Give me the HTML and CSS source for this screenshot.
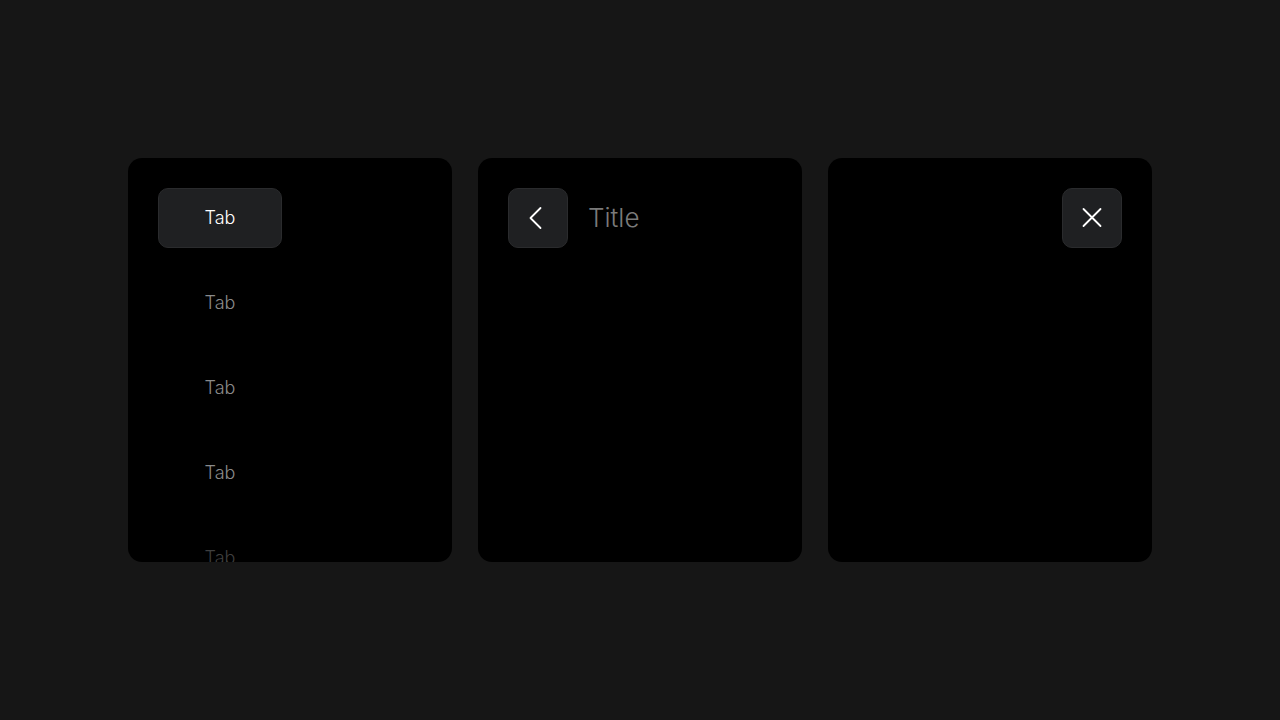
FILE: index.html
```html
<!DOCTYPE html>
<html>
  <head>
    <title>Panels</title>
    <link rel="stylesheet" href="styles.css">
  </head>
  <body>
    <div class="panels">
      <!-- Tab list -->
      <div class="panel">
        <div class="tab-list">
          <button class="tab active">Tab</button>
          <button class="tab">Tab</button>
          <button class="tab">Tab</button>
          <button class="tab">Tab</button>
          <button class="tab faded">Tab</button>
        </div>
      </div>

      <!-- Header with back -->
      <div class="panel">
        <div class="header">
          <button class="icon-btn" aria-label="Back">
            <svg width="24" height="24" viewBox="0 0 24 24" fill="none" stroke="#fff" stroke-width="1.8" stroke-linecap="round" stroke-linejoin="round">
              <path d="M14.5 2 L4.5 12 L14.5 22"/>
            </svg>
          </button>
          <span class="title">Title</span>
        </div>
      </div>

      <!-- Header with close -->
      <div class="panel">
        <div class="header end">
          <button class="icon-btn" aria-label="Close">
            <svg width="24" height="24" viewBox="0 0 24 24" fill="none" stroke="#fff" stroke-width="1.8" stroke-linecap="round">
              <path d="M3.5 3 L20.5 20 M20.5 3 L3.5 20"/>
            </svg>
          </button>
        </div>
      </div>
    </div>
  </body>
</html>
```

FILE: styles.css
```css
body {
  margin: 0;
  padding: 0;
  background-color: #161616;
  font-family: Inter, "Noto Sans", Arial, sans-serif;
  height: 100vh;
}

.panels {
  display: flex;
  gap: 26px;
  padding: 158px 0 0 128px;
}

.panel {
  width: 324px;
  height: 404px;
  box-sizing: border-box;
  padding: 30px;
  background-color: #000;
  border-radius: 14px;
  overflow: hidden;
}

/* Tabs */
.tab-list {
  display: flex;
  flex-direction: column;
  gap: 25px;
}

.tab {
  width: 124px;
  height: 60px;
  box-sizing: border-box;
  border: 1px solid transparent;
  border-radius: 10px;
  background: none;
  color: #8a8a8a;
  font-family: inherit;
  font-size: 18px;
  font-weight: 300;
  padding: 0 0 2px;
  flex-shrink: 0;
}

.tab.active {
  background-color: #1f2022;
  border-color: #2a2b2d;
  color: #fff;
}

.tab.faded {
  color: #3f3f3f;
}

/* Headers */
.header {
  display: flex;
  align-items: center;
  gap: 20px;
}

.header.end {
  justify-content: flex-end;
}

.icon-btn {
  width: 60px;
  height: 60px;
  box-sizing: border-box;
  border: 1px solid #2a2b2d;
  border-radius: 10px;
  background-color: #1f2022;
  padding: 0;
  display: flex;
  align-items: center;
  justify-content: center;
}

.title {
  color: #7a7a7a;
  font-size: 26px;
  font-weight: 300;
  padding-bottom: 2px;
}
```
